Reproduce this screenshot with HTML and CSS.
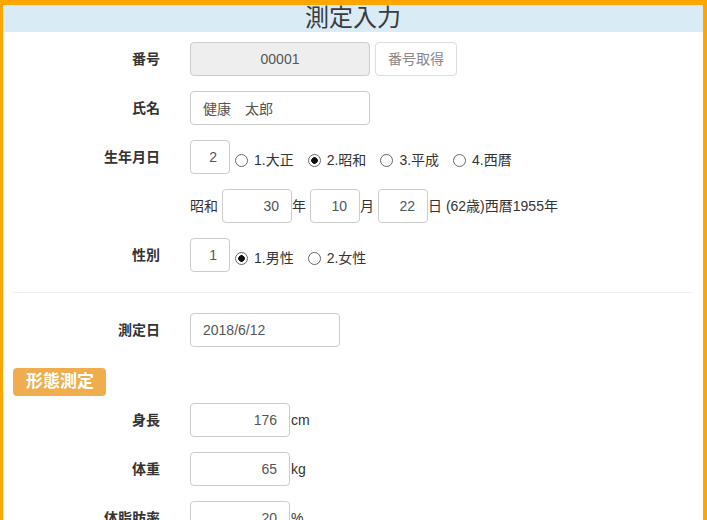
FILE: index.html
```html
<!DOCTYPE html>
<html lang="ja">
<head>
<meta charset="utf-8">
<title>測定入力</title>
<link rel="stylesheet" href="styles.css">
</head>
<body>
<div class="page">
  <h1 class="title">測定入力</h1>
  <div class="content">
    <div class="row">
      <label class="lbl">番号</label>
      <div class="ctrl">
        <input class="fc ro center w180" value="00001" readonly>
        <button class="btn" disabled>番号取得</button>
      </div>
    </div>
    <div class="row">
      <label class="lbl">氏名</label>
      <div class="ctrl">
        <input class="fc w180" value="健康　太郎">
      </div>
    </div>
    <div class="row">
      <label class="lbl">生年月日</label>
      <div class="ctrl col">
        <div class="line">
          <input class="fc right w40" value="2">
          <div class="radios">
            <label class="ri"><input type="radio" name="era" class="rd"><span>1.大正</span></label>
            <label class="ri"><input type="radio" name="era" class="rd" checked><span>2.昭和</span></label>
            <label class="ri"><input type="radio" name="era" class="rd"><span>3.平成</span></label>
            <label class="ri"><input type="radio" name="era" class="rd"><span>4.西暦</span></label>
          </div>
        </div>
        <div class="line mid">
          <span class="txt">昭和</span>
          <input class="fc right w70 sp" value="30"><span class="txt">年</span>
          <input class="fc right w50 sp" value="10"><span class="txt">月</span>
          <input class="fc right w50 sp" value="22"><span class="txt">日 (62歳)西暦1955年</span>
        </div>
      </div>
    </div>
    <div class="row last">
      <label class="lbl">性別</label>
      <div class="ctrl">
        <input class="fc right w40" value="1">
        <div class="radios">
          <label class="ri"><input type="radio" name="sex" class="rd" checked><span>1.男性</span></label>
          <label class="ri"><input type="radio" name="sex" class="rd"><span>2.女性</span></label>
        </div>
      </div>
    </div>
    <hr class="sep">
    <div class="row">
      <label class="lbl">測定日</label>
      <div class="ctrl">
        <input class="fc w150" value="2018/6/12">
      </div>
    </div>
    <div class="badge">形態測定</div>
    <div class="row">
      <label class="lbl">身長</label>
      <div class="ctrl mid">
        <input class="fc right w100" value="176"><span class="unit">cm</span>
      </div>
    </div>
    <div class="row">
      <label class="lbl">体重</label>
      <div class="ctrl mid">
        <input class="fc right w100" value="65"><span class="unit">kg</span>
      </div>
    </div>
    <div class="row">
      <label class="lbl">体脂肪率</label>
      <div class="ctrl mid">
        <input class="fc right w100" value="20"><span class="unit">%</span>
      </div>
    </div>
  </div>
</div>
</body>
</html>
```
FILE: styles.css
```css
html, body {
  margin: 0;
  padding: 0;
  overflow: hidden;
}
body {
  font-family: "Liberation Sans", "Noto Sans CJK JP", sans-serif;
  font-size: 14px;
  line-height: 20px;
  color: #333;
  background: #fff;
}
.page {
  border-top: 5px solid #ffa500;
  border-left: 3px solid #ffa500;
  border-right: 4px solid #ffa500;
  border-bottom: 4px solid #ffa500;
  min-height: 700px;
}
.title {
  margin: 0;
  height: 27px;
  line-height: 26px;
  background: #d9ecf5;
  text-align: center;
  font-size: 24px;
  font-weight: 400;
  color: #3a3a3a;
}
.content {
  padding: 10px 10px 0;
}
.row {
  display: grid;
  grid-template-columns: 147px 1fr;
  column-gap: 30px;
  margin-bottom: 15px;
}
.row.last {
  margin-bottom: 0;
}
.lbl {
  text-align: right;
  font-weight: 700;
  padding-top: 7px;
  line-height: 20px;
}
.ctrl {
  display: flex;
  align-items: flex-start;
}
.ctrl.col {
  flex-direction: column;
  gap: 15px;
}
.ctrl.mid, .line.mid {
  align-items: center;
}
.line {
  display: flex;
  align-items: flex-start;
}
.fc {
  box-sizing: border-box;
  height: 34px;
  padding: 6px 12px;
  font-family: inherit;
  font-size: 14px;
  line-height: 20px;
  color: #555;
  background: #fff;
  border: 1px solid #ccc;
  border-radius: 4px;
  margin: 0;
  outline: none;
}
.fc.ro { background: #eee; }
.fc.center { text-align: center; }
.fc.right { text-align: right; }
.w180 { width: 180px; }
.w150 { width: 150px; }
.w100 { width: 100px; }
.w70 { width: 70px; }
.w50 { width: 50px; }
.w40 { width: 40px; }
.fc.sp { margin-left: 4px; }
.btn {
  box-sizing: border-box;
  height: 34px;
  width: 82px;
  margin-left: 5px;
  padding: 6px 0;
  font-family: inherit;
  font-size: 14px;
  line-height: 20px;
  color: #888;
  background: #fff;
  border: 1px solid #ddd;
  border-radius: 4px;
}
.radios {
  display: flex;
  padding-top: 10px;
  margin-left: 5px;
}
.ri {
  display: inline-flex;
  align-items: center;
  gap: 6px;
  margin-right: 14px;
  line-height: 20px;
}
.rd {
  appearance: none;
  -webkit-appearance: none;
  box-sizing: border-box;
  width: 13px;
  height: 13px;
  margin: 0;
  border: 1px solid #666;
  border-radius: 50%;
  background: #fff;
}
.rd:checked {
  background: radial-gradient(circle, #111 0 3px, #fff 3.6px);
}
.txt { line-height: 20px; }
.unit { margin-left: 1px; }
.sep {
  border: 0;
  border-top: 1px solid #eee;
  margin: 20px 0;
}
.badge {
  display: inline-block;
  margin-top: 6px;
  margin-bottom: 7px;
  height: 28px;
  line-height: 28px;
  padding: 0 12px 0 13px;
  background: #f0ad4e;
  color: #fff;
  font-weight: 700;
  font-size: 17px;
  border-radius: 4px;
}
```
